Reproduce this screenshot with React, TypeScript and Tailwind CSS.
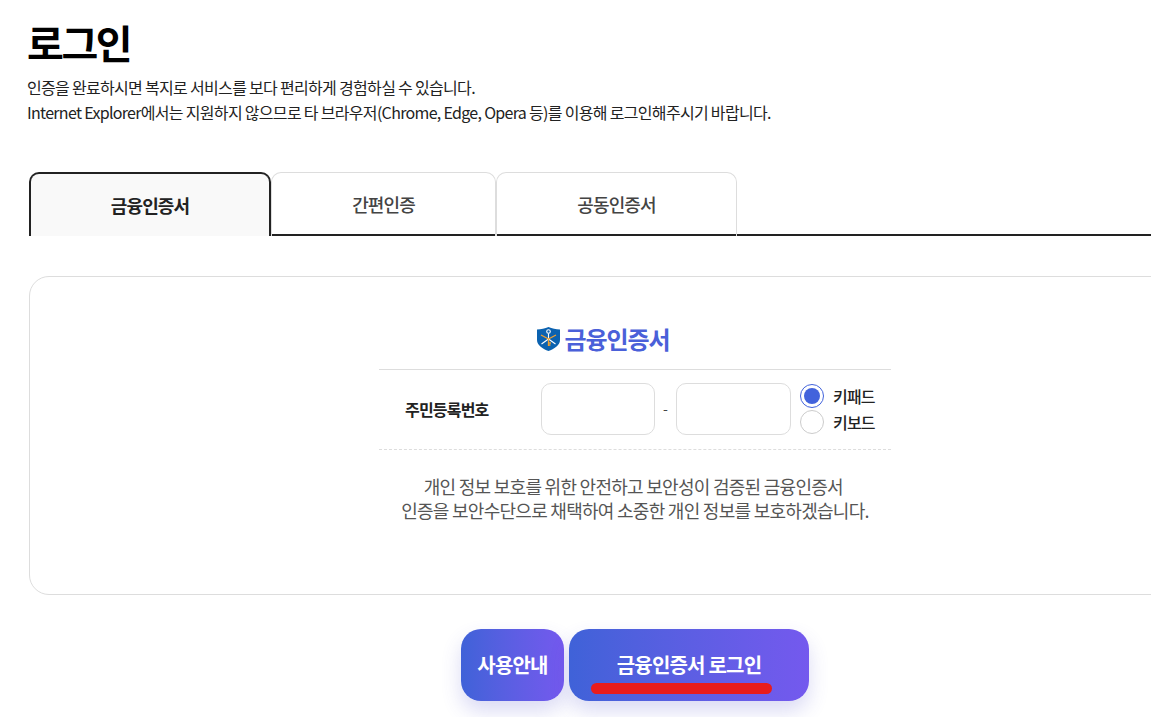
const tabs = ['간편인증', '공동인증서']

function ShieldLogo() {
  return (
    <svg width="25" height="26" viewBox="0 0 25 26" className="shrink-0">
      <path d="M1 3.5 C5 3.5 9 2.5 12.5 1 C16 2.5 20 3.5 24 3.5 V14 C24 19.5 18 23 12.5 25 C7 23 1 19.5 1 14 Z" fill="#0b62b0" />
      <circle cx="12.5" cy="5.5" r="1.8" fill="none" stroke="#ffffff" strokeWidth="1.1" />
      <path d="M12.5 7.5 V13 M12.5 13 L5.5 18 M12.5 13 L19.5 18" stroke="#ffffff" strokeWidth="1.1" fill="none" />
      <path d="M12.5 13 L5 9 M12.5 13 L20 9 M12.5 13 V20 M12.5 17 H15 M12.5 19 H14.5" stroke="#f0a030" strokeWidth="1.3" fill="none" />
    </svg>
  )
}

function Radio({ label, checked }: { label: string; checked?: boolean }) {
  return (
    <div className="flex items-center gap-[9px] h-[25px]">
      <span
        className={`w-[24px] h-[24px] rounded-full border flex items-center justify-center ${
          checked ? 'border-[#4263dc]' : 'border-[#cccccc]'
        }`}
      >
        {checked && <span className="w-[16px] h-[16px] rounded-full bg-[#4263dc]" />}
      </span>
      <span className="text-[16px] font-medium tracking-[-0.05em] text-[#222222]">{label}</span>
    </div>
  )
}

export default function App() {
  return (
    <div
      className="w-[1151px] h-[717px] overflow-hidden bg-white text-[#222222]"
      style={{ fontFamily: '"Noto Sans CJK KR", "Noto Sans", sans-serif' }}
    >
      <div className="w-[1240px] pl-[27px]">
        <h1 className="h-[75px] pt-[14px] text-[40px] leading-[56px] font-bold tracking-[-0.06em] text-black">로그인</h1>
        <p className="text-[16px] leading-[25px] tracking-[-0.043em] text-[#222222]">
          인증을 완료하시면 복지로 서비스를 보다 편리하게 경험하실 수 있습니다.
          <br />
          Internet Explorer에서는 지원하지 않으므로 타 브라우저(Chrome, Edge, Opera 등)를 이용해 로그인해주시기 바랍니다.
        </p>

        {/* Tabs */}
        <div className="mt-[47px] ml-[2px] flex h-[64px] border-b-2 border-[#222222]">
          <div className="shrink-0 w-[242px] h-[64px] rounded-t-[10px] border-2 border-b-0 border-[#222222] bg-[#f9f9f9] flex items-center justify-center text-[18px] font-bold tracking-[-0.05em]">
            금융인증서
          </div>
          <div className="shrink-0 w-[225px] h-[64px] rounded-t-[10px] border border-b-0 border-[#dddddd] flex items-center justify-center text-[18px] font-medium tracking-[-0.05em] text-[#444444]">
            {tabs[0]}
          </div>
          <div className="shrink-0 w-[241px] h-[64px] rounded-t-[10px] border border-b-0 border-[#dddddd] flex items-center justify-center text-[18px] font-medium tracking-[-0.05em] text-[#444444]">
            {tabs[1]}
          </div>
        </div>

        {/* Card */}
        <div className="mt-[40px] ml-[2px] w-[1212px] h-[319px] rounded-[20px] border border-[#dddddd] flex flex-col items-center pt-[47px]">
          <div className="mr-[65px] flex items-center justify-center gap-[4px] h-[30px]">
            <ShieldLogo />
            <span className="text-[24px] font-bold tracking-[-0.045em] text-[#4a60d9]">금융인증서</span>
          </div>
          <div className="mt-[15px] w-[512px] h-[81px] pb-[2px] border-t border-b border-t-[#dddddd] border-b-[#dddddd] [border-bottom-style:dashed] flex items-center">
            <span className="w-[162px] pl-[26px] text-[16px] font-bold tracking-[-0.05em]">주민등록번호</span>
            <div className="w-[114px] h-[52px] rounded-[10px] border border-[#dddddd]" />
            <span className="w-[21px] text-center text-[14px] text-[#444444]">-</span>
            <div className="w-[115px] h-[52px] rounded-[10px] border border-[#dddddd]" />
            <div className="ml-[9px] flex flex-col gap-[1px]">
              <Radio label="키패드" checked />
              <Radio label="키보드" />
            </div>
          </div>
          <p className="mt-[24px] text-center text-[18px] leading-[24px] tracking-[-0.04em] text-[#555555]">
            개인 정보 보호를 위한 안전하고 보안성이 검증된 금융인증서&nbsp;
            <br />
            인증을 보안수단으로 채택하여 소중한 개인 정보를 보호하겠습니다.
          </p>
        </div>

        {/* Buttons */}
        <div className="mt-[34px] ml-[1px] w-[1214px] flex justify-center gap-[5px]">
          <div className="w-[103px] h-[72px] rounded-[20px] bg-gradient-to-r from-[#3f62d8] to-[#7459ee] shadow-[0_10px_20px_rgba(70,70,200,0.2)] flex items-center justify-center text-[20px] font-bold tracking-[-0.04em] text-white">
            사용안내
          </div>
          <div className="relative w-[240px] h-[72px] rounded-[20px] bg-gradient-to-r from-[#3f62d8] to-[#7459ee] shadow-[0_10px_20px_rgba(70,70,200,0.2)] flex items-center justify-center text-[20px] font-bold tracking-[-0.04em] text-white">
            금융인증서 로그인
            <span className="absolute left-[22px] top-[54px] w-[181px] h-[11px] rounded-full bg-[#e81c1c]" />
          </div>
        </div>
      </div>
    </div>
  )
}
